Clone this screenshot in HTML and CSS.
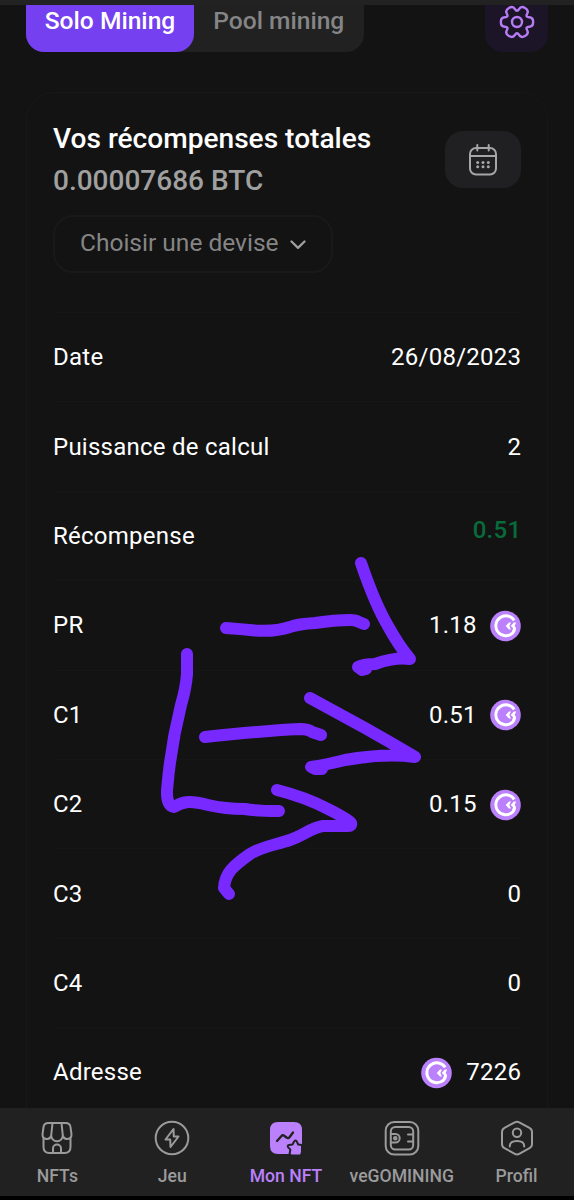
FILE: index.html
```html
<!DOCTYPE html>
<html lang="fr">
<head>
  <meta charset="UTF-8" />
  <meta name="viewport" content="width=device-width, initial-scale=1.0">
  <title>GoMining - Mon NFT</title>
  <link rel="stylesheet" href="styles.css">
</head>
<body>

  <!-- shared token logo -->
  <svg class="defs" width="0" height="0">
    <symbol id="coin" viewBox="0 0 32 32">
      <circle cx="16" cy="16" r="15.8" fill="#bb80fb"/>
      <path d="M25 10.2A10.3 10.3 0 1 0 23.3 23.4" fill="none" stroke="#fff" stroke-width="3"/>
      <path d="M21.6 12.4h-2L16.2 16l3.4 3.6h2L20 16z" fill="#fff"/>
      <path d="M27 12.4h-2.4L21.4 16l2.4 2.2-1.8 5.2 2.2 1c2-1.8 2.9-4.4 2.6-6.6L25.4 16z" fill="#fff"/>
    </symbol>
  </svg>

  <div class="status-strip"></div>

  <main class="content">
    <div class="toolbar">
      <div class="tabs">
        <button class="tab active">Solo Mining</button>
        <button class="tab">Pool mining</button>
      </div>
      <button class="settings-btn">
        <svg width="36" height="36" viewBox="-18 -18 36 36" fill="none" stroke="#b67cf5" stroke-width="2.4">
          <path d="M16.15 0Q16.15 4.63 12.19 4.69Q8.23 4.75 10.16 8.21Q12.09 11.67 8.07 13.99Q4.06 16.3 2.03 12.9Q0 9.5-2.03 12.9Q-4.06 16.3-8.07 13.99Q-12.09 11.67-10.16 8.21Q-8.23 4.75-12.19 4.69Q-16.15 4.63-16.15 0Q-16.15-4.63-12.19-4.69Q-8.23-4.75-10.16-8.21Q-12.09-11.67-8.07-13.99Q-4.06-16.3-2.03-12.9Q0-9.5 2.03-12.9Q4.06-16.3 8.07-13.99Q12.09-11.67 10.16-8.21Q8.23-4.75 12.19-4.69Q16.15-4.63 16.15 0z"/>
          <circle r="5"/>
        </svg>
      </button>
    </div>

    <section class="card">
      <div class="card-head">
        <div class="totals">
          <h1>Vos récompenses totales</h1>
          <p class="amount">0.00007686 BTC</p>
        </div>
        <button class="calendar-btn">
          <svg width="30" height="34" viewBox="0 0 30 34" fill="none" stroke="#a6a6a7" stroke-width="2" stroke-linecap="round">
            <rect x="2" y="5" width="26" height="26.5" rx="6"/>
            <path d="M2 13h26M9.3 2v5.5M20.7 2v5.5"/>
            <g fill="#a6a6a7" stroke="none">
              <circle cx="9.7" cy="19.5" r="1.5"/><circle cx="15" cy="19.5" r="1.5"/><circle cx="20.3" cy="19.5" r="1.5"/>
              <circle cx="9.7" cy="23.8" r="1.5"/><circle cx="15" cy="23.8" r="1.5"/><circle cx="20.3" cy="23.8" r="1.5"/>
            </g>
          </svg>
        </button>
      </div>

      <button class="currency">
        <span>Choisir une devise</span>
        <svg width="16" height="10" viewBox="0 0 16 10" fill="none" stroke="#a0a0a0" stroke-width="2.3" stroke-linecap="round" stroke-linejoin="round">
          <path d="M1.5 1.5L8 7.8l6.5-6.3"/>
        </svg>
      </button>

      <dl class="rows">
        <div class="row"><dt>Date</dt><dd>26/08/2023</dd></div>
        <div class="row"><dt>Puissance de calcul</dt><dd>2</dd></div>
        <div class="row"><dt>Récompense</dt><dd class="reward">0.51</dd></div>
        <div class="row"><dt>PR</dt><dd>1.18 <svg class="coin"><use href="#coin"/></svg></dd></div>
        <div class="row"><dt>C1</dt><dd>0.51 <svg class="coin"><use href="#coin"/></svg></dd></div>
        <div class="row"><dt>C2</dt><dd>0.15 <svg class="coin"><use href="#coin"/></svg></dd></div>
        <div class="row"><dt>C3</dt><dd>0</dd></div>
        <div class="row"><dt>C4</dt><dd>0</dd></div>
        <div class="row"><dt>Adresse</dt><dd><svg class="coin"><use href="#coin"/></svg> 7226</dd></div>
      </dl>
    </section>
  </main>

  <nav class="bottom-nav">
    <a class="nav-item">
      <svg width="36" height="36" viewBox="0 0 36 36">
        <path d="M4.5 18.5V27q0 6 6 6h15q6 0 6-6v-8.5M14 33v-4.5a4 4 0 0 1 8 0V33"/>
        <path d="M9.5 3h17q4.5 0 5 4l1 7.5a4.4 4.4 0 0 1-8.7 1 5.8 5.8 0 0 1-11.6 0 4.4 4.4 0 0 1-8.7-1l1-7.5q.5-4 5-4zM13.5 3l-1.3 12.5M22.5 3l1.3 12.5"/>
      </svg>
      <span>NFTs</span>
    </a>
    <a class="nav-item">
      <svg width="36" height="36" viewBox="0 0 36 36">
        <circle cx="18" cy="18" r="16.3"/>
        <path d="M19.5 9l-8 10.5h4.7l.3 7.5 8-10.5h-4.7z"/>
      </svg>
      <span>Jeu</span>
    </a>
    <a class="nav-item active">
      <svg width="36" height="36" viewBox="0 0 36 36">
        <path class="solid" d="M10 2h16q8 0 8 8v24H10q-8 0-8-8V10q0-8 8-8z"/>
        <path class="cut" d="M9 21l4.5-5q1.3-1.5 3 0l2 1.5q1.7 1.2 3-.3l3.5-4.7"/>
        <path class="star" d="M27.5 20.5q1 0 1.5 1.3l1.2 2.7 3.8.6v7l-1.2 3.4h-9.8l-1.4-2 .8-3.9-2.2-2.2q-1.2-2 .8-2.500l3.500-.4 1.500-2.700q.5-1.300 1.500-1.300z"/>
      </svg>
      <span>Mon NFT</span>
    </a>
    <a class="nav-item">
      <svg width="36" height="36" viewBox="0 0 36 36">
        <rect x="1.7" y="2" width="32.6" height="32.5" rx="8.5"/>
        <rect x="6.8" y="7" width="22.4" height="22.5" rx="4.5"/>
        <path d="M7 14h4.5a4.2 4.2 0 0 1 0 8.4H7M29 14.5h-5M29 21.5h-5"/>
        <circle class="dot" cx="11.3" cy="18.2" r="1.3"/>
      </svg>
      <span>veGOMINING</span>
    </a>
    <a class="nav-item">
      <svg width="36" height="36" viewBox="0 0 36 36">
        <path d="M15.8 2.3q2.2-1.2 4.4 0l10.3 5.5q2.5 1.4 2.5 4.2v12q0 2.8-2.5 4.2l-10.3 5.6q-2.2 1.2-4.4 0L5.5 28.2Q3 26.8 3 24v-12q0-2.8 2.5-4.2z"/>
        <circle cx="18" cy="12.8" r="4.2"/>
        <path d="M10.8 26.5v-.5q0-5 7.2-5t7.2 5v.5"/>
      </svg>
      <span>Profil</span>
    </a>
  </nav>

  <!-- hand-drawn arrows over the table -->
  <svg class="marker" width="574" height="1200" viewBox="0 0 574 1200">
    <path d="M226 628Q240 629 255 630.5Q275 632 290 627Q298 624 315 623Q335 620 350 620Q356 620 359 622L364 624"/>
    <path d="M361 563Q375 604 388 626Q399 646 410 659Q395 657 375 664Q363 664 358 667L362 670L366 669"/>
    <path d="M187 654V674Q186 688 181 705Q171 745 167.5 785Q165 805 174 807C182 802 188 800 208 805Q225 809 245 809Q255 811 279 811"/>
    <path d="M205 737Q260 731 300 729Q308 729 312 732L321 735"/>
    <path d="M310 698L365 728Q390 742 415 757Q385 753 345 760Q325 765 311 767L315 769H322"/>
    <path d="M277 790Q305 797 328 809Q348 819 351 823Q352 826 348 826H323C310 828 305 835 290 840C275 845 263 846 250 854C233 866 225 873 224 888L229 894"/>
  </svg>

</body>
</html>
```
FILE: styles.css
```css
* {
  margin: 0; padding: 0; box-sizing: border-box;
  font-family: Roboto, "Liberation Sans", sans-serif;
}

html, body { height: 100%; overflow: hidden; }

body {
  display: flex; flex-direction: column;
  position: relative;
  background: #131313;
  color: #fff;
  border-bottom: 4px solid #000;
}

button { border: none; background: none; color: inherit; }

.defs { position: absolute; }

.status-strip { flex: none; height: 5px; background: #222223; }

.content {
  flex: 1; min-height: 0; overflow: hidden;
  padding: 0 26px;
}

/* top of the toolbar is scrolled under the strip */
.toolbar {
  display: flex; justify-content: space-between;
  height: 47px;
}

.tabs {
  display: flex; width: 337.5px;
  background: #212122;
  border-radius: 0 0 18px 18px;
}

.tab {
  flex: 1; height: 47px;
  padding-bottom: 15px;
  font-size: 24.6px; font-weight: 500; line-height: 32px;
  color: #858586;
}

.tab.active {
  flex: none; width: 168px;
  background: #7440f0; color: #fff;
  border-radius: 0 0 18px 18px;
}

.settings-btn {
  width: 63px; padding-bottom: 15px;
  background: #1c1528;
  border-radius: 0 0 18px 18px;
}

.settings-btn svg { display: block; margin: -1px auto 0; }

.card {
  height: 1100px; margin-top: 40px;
  padding: 29px 26px 0;
  border: 1px solid #181818;
  border-radius: 28px;
}

.card-head {
  display: flex; justify-content: space-between;
}

.card-head h1 {
  font-size: 28.1px; font-weight: 500; line-height: 34px;
}

.amount {
  margin-top: 7px;
  font-size: 28px; font-weight: 500; line-height: 36px;
  color: #a0a0a0;
}

.calendar-btn {
  display: flex; align-items: center; justify-content: center;
  width: 76px; height: 57px; margin-top: 9px;
  background: #202022;
  border-radius: 18px;
}

.currency {
  display: flex; align-items: center; gap: 11px;
  width: 280px; height: 58px; margin-top: 16px;
  padding: 0 0 2px 25px;
  border: 2px solid #191919;
  border-radius: 20px;
  font-size: 24.5px;
  color: #858586;
}

.currency span { margin-top: -1px; }
.currency svg { margin-top: 3px; }

.rows { margin-top: 39px; }

.row {
  display: flex; justify-content: space-between; align-items: center;
  height: 89.4px;
  border-top: 1px solid #161616;
  font-size: 24px; letter-spacing: .25px;
}

.row dd {
  display: flex; align-items: center; gap: 13.5px;
  margin-right: -.3px;
}

.row .reward {
  padding-bottom: 12px;
  font-weight: 500;
  color: #096a3a;
}

.coin { width: 31px; height: 32px; margin: 1px .5px 0 -.5px; }

.bottom-nav {
  flex: none; display: flex;
  height: 88px;
  background: #212122;
}

.nav-item {
  flex: 1;
  display: flex; flex-direction: column; align-items: center;
  padding-top: 12px;
  font-size: 17.6px; font-weight: 500; line-height: 24px;
  color: #9b9b9c;
}

.nav-item svg {
  fill: none; stroke: #9b9b9c; stroke-width: 2;
  stroke-linecap: round; stroke-linejoin: round;
}

.nav-item span { margin-top: 8px; }

.nav-item.active { margin: 0 1px 0 -1px; color: #bb80fb; }
.nav-item .solid { fill: #bb80fb; stroke: none; }
.nav-item .cut { stroke: #212122; stroke-width: 2.3; }
.nav-item .star { fill: #bb80fb; stroke: #212122; stroke-width: 2; }

.marker {
  position: absolute; left: 0; top: 0;
  fill: none; stroke: #7729ff; stroke-width: 12;
  stroke-linecap: round; stroke-linejoin: round;
  pointer-events: none;
}
```
